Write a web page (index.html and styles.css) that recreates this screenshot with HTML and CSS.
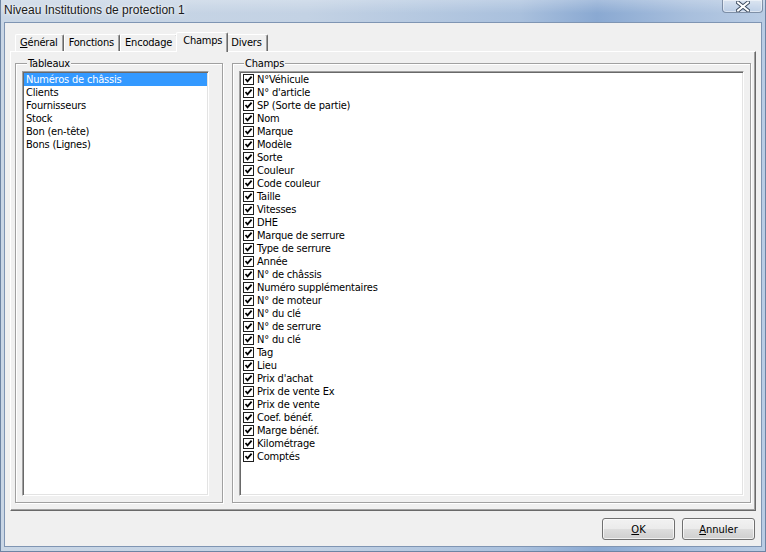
FILE: index.html
```html
<!DOCTYPE html>
<html lang="fr">
<head>
<meta charset="utf-8">
<title>Niveau Institutions de protection 1</title>
<link rel="stylesheet" href="styles.css">
</head>
<body>
<div class="window">
  <div class="titlebar">
    <span class="title">Niveau Institutions de protection 1</span>
    <div class="close">
      <svg width="14" height="11" viewBox="0 0 14 11">
        <path d="M2 1.5 L12 9.5 M12 1.5 L2 9.5" stroke="#3b4a5e" stroke-width="4" stroke-linecap="square"/>
        <path d="M2 1.5 L12 9.5 M12 1.5 L2 9.5" stroke="#ffffff" stroke-width="2" stroke-linecap="square"/>
      </svg>
    </div>
  </div>
  <div class="client">
    <div class="tabs">
      <div class="tab"><u>G</u>énéral</div>
      <div class="tab">Fonctions</div>
      <div class="tab">Encodage</div>
      <div class="tab active">Champs</div>
      <div class="tab">Divers</div>
    </div>
    <div class="panel">
      <fieldset class="group group-tables">
        <legend>Tableaux</legend>
        <div class="listbox">
          <div class="item selected">Numéros de châssis</div>
          <div class="item">Clients</div>
          <div class="item">Fournisseurs</div>
          <div class="item">Stock</div>
          <div class="item">Bon (en-tête)</div>
          <div class="item">Bons (Lignes)</div>
        </div>
      </fieldset>
      <fieldset class="group group-fields">
        <legend>Champs</legend>
        <div class="listbox checklist">
          <div class="check"><span class="box"></span>N°Véhicule</div>
          <div class="check"><span class="box"></span>N° d'article</div>
          <div class="check"><span class="box"></span>SP (Sorte de partie)</div>
          <div class="check"><span class="box"></span>Nom</div>
          <div class="check"><span class="box"></span>Marque</div>
          <div class="check"><span class="box"></span>Modèle</div>
          <div class="check"><span class="box"></span>Sorte</div>
          <div class="check"><span class="box"></span>Couleur</div>
          <div class="check"><span class="box"></span>Code couleur</div>
          <div class="check"><span class="box"></span>Taille</div>
          <div class="check"><span class="box"></span>Vitesses</div>
          <div class="check"><span class="box"></span>DHE</div>
          <div class="check"><span class="box"></span>Marque de serrure</div>
          <div class="check"><span class="box"></span>Type de serrure</div>
          <div class="check"><span class="box"></span>Année</div>
          <div class="check"><span class="box"></span>N° de châssis</div>
          <div class="check"><span class="box"></span>Numéro supplémentaires</div>
          <div class="check"><span class="box"></span>N° de moteur</div>
          <div class="check"><span class="box"></span>N° du clé</div>
          <div class="check"><span class="box"></span>N° de serrure</div>
          <div class="check"><span class="box"></span>N° du clé</div>
          <div class="check"><span class="box"></span>Tag</div>
          <div class="check"><span class="box"></span>Lieu</div>
          <div class="check"><span class="box"></span>Prix d'achat</div>
          <div class="check"><span class="box"></span>Prix de vente Ex</div>
          <div class="check"><span class="box"></span>Prix de vente</div>
          <div class="check"><span class="box"></span>Coef. bénéf.</div>
          <div class="check"><span class="box"></span>Marge bénéf.</div>
          <div class="check"><span class="box"></span>Kilométrage</div>
          <div class="check"><span class="box"></span>Comptés</div>
        </div>
      </fieldset>
    </div>
    <div class="buttons">
      <button class="btn"><u>O</u>K</button>
      <button class="btn"><u>A</u>nnuler</button>
    </div>
  </div>
</div>
</body>
</html>
```

FILE: styles.css
```css
html, body {
  margin: 0;
  padding: 0;
  width: 766px;
  height: 552px;
  overflow: hidden;
}

body {
  font-family: "DejaVu Sans Condensed", "DejaVu Sans", "Liberation Sans", sans-serif;
  font-stretch: condensed;
  font-size: 11px;
  letter-spacing: -0.2px;
  color: #000;
}

.window {
  width: 766px;
  height: 552px;
  box-sizing: border-box;
  display: flex;
  flex-direction: column;
  background: linear-gradient(to right, #c9d6e5 0%, #c3d2e4 40%, #a9c0dd 68%, #8aa9d2 78%, #a8bfdd 90%, #b9cce4 100%);
  border: 1px solid #6d84a3;
  border-top: none;
}

.titlebar {
  height: 22px;
  display: flex;
  align-items: flex-start;
  justify-content: space-between;
  background: linear-gradient(to bottom, rgba(255,255,255,0.25), rgba(255,255,255,0) 60%);
}

.title {
  font-family: "Liberation Sans", "DejaVu Sans", sans-serif;
  font-stretch: normal;
  letter-spacing: 0;
  font-size: 12px;
  line-height: 21px;
  padding-left: 3px;
  color: #1a1a1a;
  text-shadow: 0 0 6px rgba(255,255,255,0.9), 0 0 3px rgba(255,255,255,0.9);
}

.close {
  width: 41px;
  height: 13px;
  margin-right: 2px;
  box-sizing: border-box;
  border: 1px solid rgba(60,80,110,0.55);
  border-top: none;
  border-radius: 0 0 4px 4px;
  background: linear-gradient(to bottom, rgba(255,255,255,0.35), rgba(200,215,235,0.35));
  display: flex;
  align-items: center;
  justify-content: center;
  box-shadow: inset 0 0 0 1px rgba(255,255,255,0.45);
}

.client {
  flex: 1;
  margin: 0 3px 4px 3px;
  background: #f0f0f0;
  border: 1px solid #7f95b3;
  display: flex;
  flex-direction: column;
  padding: 9px 5px 0 5px;
}

.tabs {
  display: flex;
  align-items: flex-end;
  height: 19px;
  padding-left: 5px;
  position: relative;
  z-index: 2;
}

.tab {
  box-sizing: border-box;
  height: 17px;
  line-height: 16px;
  padding: 0 5px 0 4px;
  background: #f0f0f0;
  border-top: 1px solid #fff;
  border-left: 1px solid #fff;
  border-right: 1px solid #696969;
  box-shadow: inset -1px 0 0 #a0a0a0;
  border-radius: 2px 2px 0 0;
  white-space: nowrap;
}

.tab.active {
  height: 20px;
  line-height: 16px;
  margin: 0 -2px -1px -2px;
  padding: 0 5px 0 6px;
  position: relative;
  z-index: 3;
}

.panel {
  flex: 1;
  min-height: 0;
  display: flex;
  gap: 9px;
  box-sizing: border-box;
  padding: 5px 4px 7px 4px;
  border-top: 1px solid #fff;
  border-left: 1px solid #fff;
  border-right: 1px solid #696969;
  border-bottom: 1px solid #696969;
  box-shadow: inset -1px -1px 0 #a0a0a0;
}

.group {
  margin: 0;
  min-width: 0;
  box-sizing: border-box;
  display: flex;
  flex-direction: column;
  border: 1px solid #a0a0a0;
  box-shadow: inset 1px 1px 0 #fff, 1px 1px 0 #fff;
  padding: 1px 6px 6px 6px;
}

.group legend {
  margin-left: 5px;
  padding: 0 1px;
  line-height: 13px;
  background: #f0f0f0;
  position: relative;
}

.group-tables {
  width: 208px;
  flex: none;
  padding-right: 13px;
}

.group-fields {
  flex: 1;
}

.listbox {
  flex: 1;
  background: #fff;
  border: 1px solid;
  border-color: #a0a0a0 #fff #fff #a0a0a0;
  box-shadow: inset 1px 1px 0 #696969, inset -1px -1px 0 #e3e3e3;
  padding: 1px;
}

.item {
  height: 13px;
  line-height: 13px;
  padding-left: 2px;
  white-space: nowrap;
}

.item.selected {
  background: #3399ff;
  color: #fff;
}

.check {
  height: 13px;
  line-height: 13px;
  display: flex;
  align-items: center;
  white-space: nowrap;
}

.box {
  width: 11px;
  height: 11px;
  box-sizing: border-box;
  margin: 0 3px 0 2px;
  border: 1px solid #1e1e1e;
  background: #fff url("data:image/svg+xml;utf8,<svg xmlns='http://www.w3.org/2000/svg' width='9' height='9' viewBox='0 0 9 9'><path d='M1.5 4 L3.5 6.3 L7.6 1.6' fill='none' stroke='black' stroke-width='1.8'/></svg>") center / 9px 9px no-repeat;
}

.buttons {
  height: 35px;
  display: flex;
  justify-content: flex-end;
  align-items: flex-start;
  gap: 7px;
  padding-top: 7px;
  box-sizing: border-box;
  padding-right: 1px;
}

.btn {
  width: 73px;
  height: 22px;
  font: inherit;
  color: #000;
  border: 1px solid #707070;
  border-radius: 3px;
  background: linear-gradient(to bottom, #f2f2f2 0%, #ebebeb 48%, #dddddd 52%, #cfcfcf 100%);
  box-shadow: inset 0 0 0 1px rgba(255,255,255,0.7);
  padding: 0;
}
```
